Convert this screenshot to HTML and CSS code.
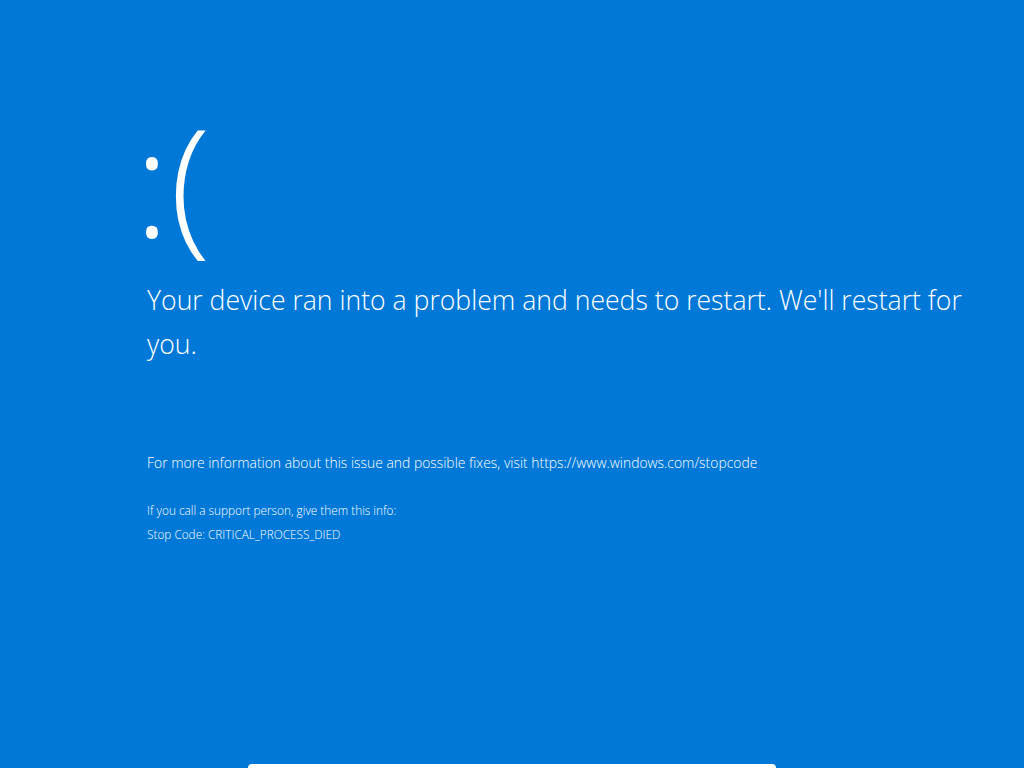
FILE: index.html
```html
<!DOCTYPE html>
<html lang="en">
<head>
    <meta charset="UTF-8">
    <meta name="viewport" content="width=device-width, initial-scale=1.0">
    <title>Stop code</title>
    <link rel="stylesheet" href="styles.css">
</head>
<body>
    <div class="screen">
        <div class="face">:(</div>
        <p class="headline">Your device ran into a problem and needs to restart. We'll restart for you.</p>
        <p class="more-info">For more information about this issue and possible fixes, visit https://www.windows.com/stopcode</p>
        <div class="support">
            <p>If you call a support person, give them this info:</p>
            <p>Stop Code: CRITICAL_PROCESS_DIED</p>
        </div>
    </div>
    <div class="bottom-sheet"></div>
</body>
</html>
```

FILE: styles.css
```css
html, body {
    height: 100%;
}
body {
    margin: 0;
    background: #0078d7;
    color: #fff;
    font-family: "Open Sans", "Noto Sans", sans-serif;
    font-weight: 300;
    overflow: hidden;
}
.screen {
    display: flex;
    flex-direction: column;
    align-items: flex-start;
    padding: 89px 0 0 147px;
    width: 840px;
}
.face {
    font-size: 150px;
    line-height: 180px;
    margin-left: -13px;
}
.headline {
    margin: 9px 0 0;
    font-size: 26.6px;
    line-height: 44px;
}
.more-info {
    margin: 87px 0 0;
    font-size: 13.9px;
    line-height: 20px;
}
.support {
    margin-top: 25px;
    font-size: 11.8px;
    line-height: 24px;
}
.support p {
    margin: 0;
}
.bottom-sheet {
    position: fixed;
    left: 248px;
    bottom: 0;
    width: 528px;
    height: 4px;
    background: #fff;
    border-radius: 6px 6px 0 0;
}
```
